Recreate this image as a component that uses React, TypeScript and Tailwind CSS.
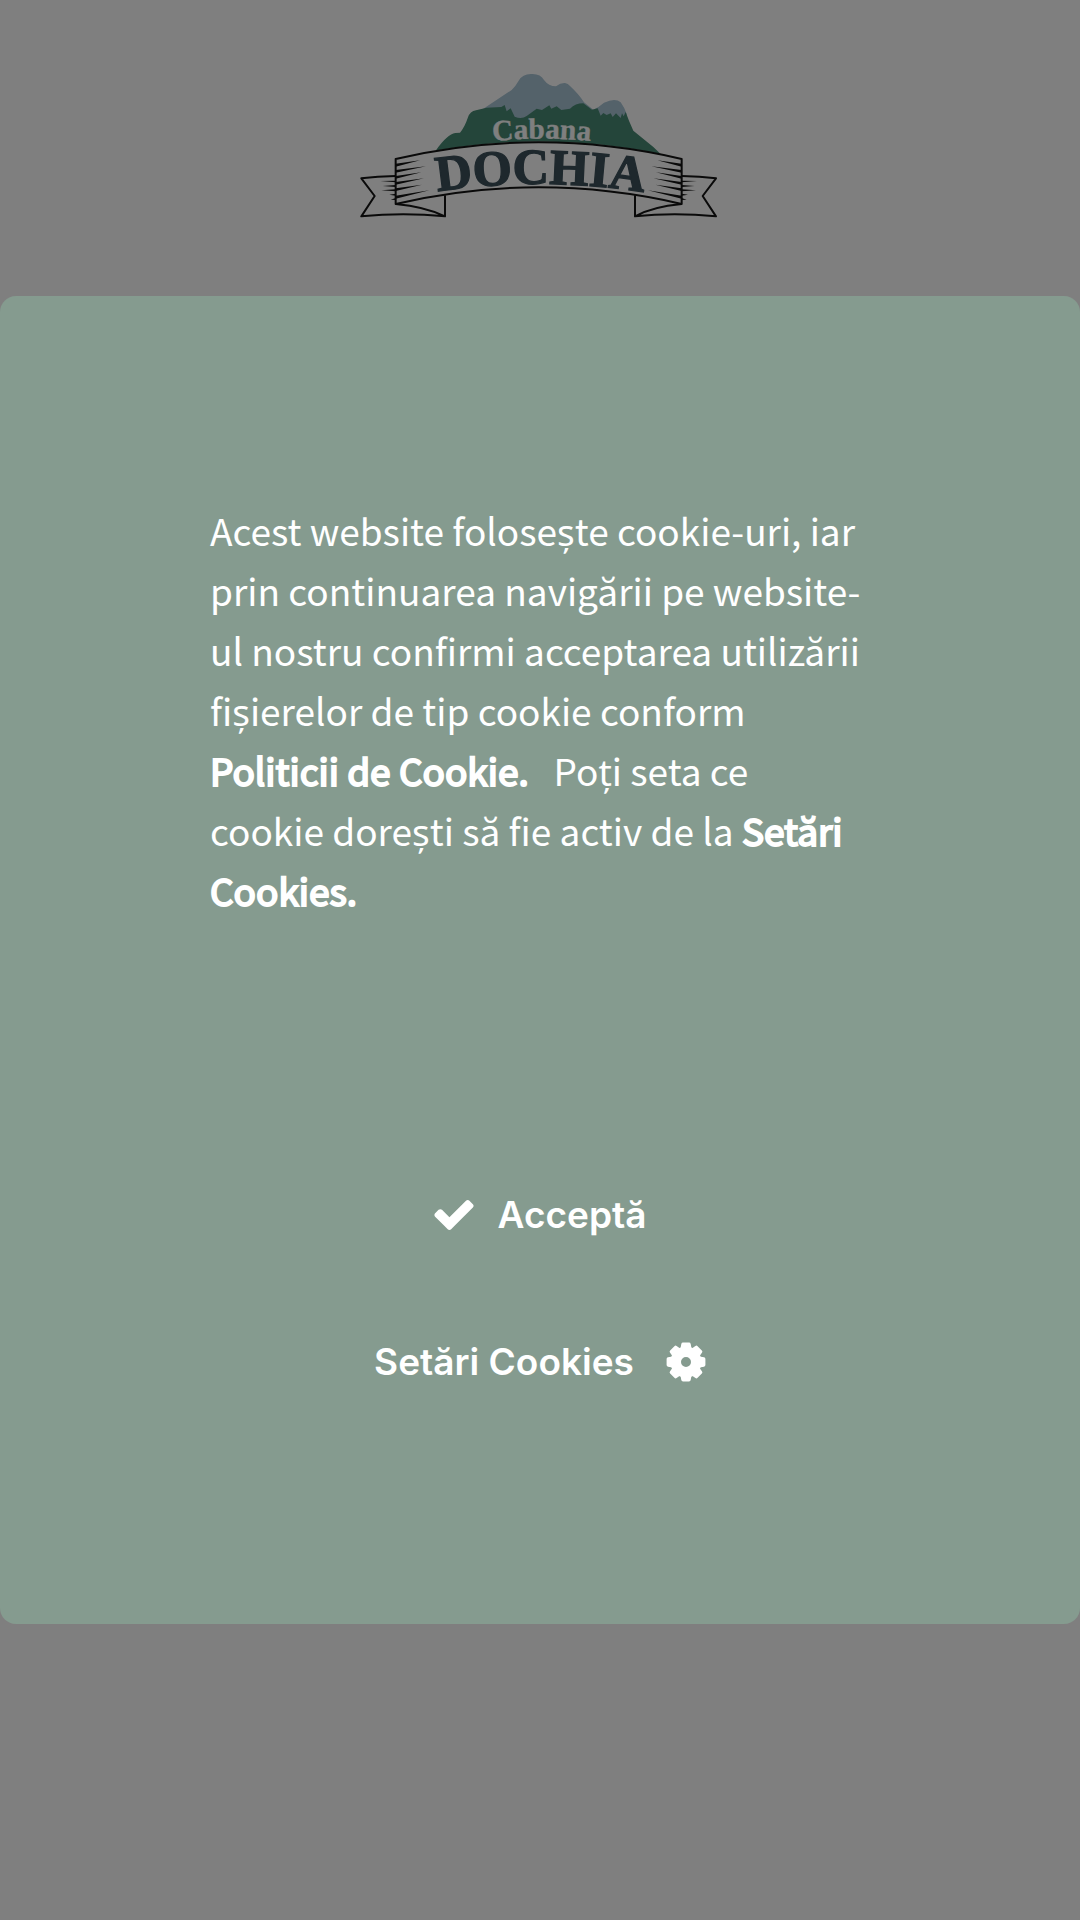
// ── Logo ──────────────────────────────────────────────────────────────────────

// one half of the ribbon, the other half is mirrored
function RibbonHalf({ fold }: { fold: number }) {
  return (
    <g>
      <path
        d={`M167 348 Q112 349 64 355 L104 408 L64 469 Q190 456 ${fold} 469 V406 M167 432 Q255 440 ${fold} 469`}
        fill="none"
        stroke="#141414"
        strokeWidth="6"
        strokeLinejoin="round"
      />
      <path
        d="M167 311 L240 301 L167 320Z M167 330 L258 319 L167 338Z M167 348 L244 337 L167 356Z M167 366 L252 355 L167 374Z M167 385 L246 374 L167 393Z M167 407 L268 391 L167 416Z"
        fill="#141414"
      />
      <path
        d="M167 362 L121 363 L167 367Z M167 375 L128 378 L167 381Z M167 388 L124 391 L167 394Z M167 401 L148 404 L167 407Z M167 414 L152 419 L167 420Z"
        fill="#141414"
      />
    </g>
  );
}

function Logo() {
  return (
    <svg viewBox="60 36 1080 438" className="w-[360px] h-auto" role="img" aria-label="Cabana Dochia">
      {/* snow */}
      <path
        d="M430 146 L515 90 Q527 78 536 62 Q548 41 575 42 Q602 41 612 60 Q626 79 648 79 Q662 68 675 69 Q684 70 690 78 Q718 104 732 127 L760 149 Q776 142 792 128 Q826 112 842 127 Q853 142 860 162 L850 200 H450 Z"
        fill="#a8c4d4"
      />
      {/* forest */}
      <path
        d="M287 272 Q322 222 346 219 L360 218 Q374 202 384 172 Q390 154 408 151 L440 143 L484 141 L494 135 L500 154 L512 145 L524 170 Q545 179 560 168 L590 146 L606 150 L628 136 L634 146 L650 139 L664 150 L690 146 Q706 130 730 130 L744 140 L756 149 L773 145 L782 167 L790 159 L800 165 L812 160 L818 171 L828 160 L842 174 L846 160 L851 169 L857 156 Q866 182 880 212 L940 261 L962 282 Q625 212 287 272Z"
        fill="#488a74"
      />
      <RibbonHalf fold={315} />
      <g transform="translate(1192 0) scale(-1 1)">
        <RibbonHalf fold={307} />
      </g>
      <path
        d="M167 297 Q596 197 1025 297 V432 Q596 332 167 432Z"
        fill="none"
        stroke="#141414"
        strokeWidth="6"
        strokeLinejoin="round"
      />
      <path id="arc-top" d="M440 245 Q605 227 770 245" fill="none" />
      <path id="arc-name" d="M257 400 Q602 342 947 403" fill="none" />
      <g fontFamily="'Liberation Serif', serif" fontWeight="700" textAnchor="middle">
        <text fill="#ffffff" stroke="#ffffff" strokeWidth="1" fontSize="88">
          <textPath href="#arc-top" startOffset="50%">Cabana</textPath>
        </text>
        <text fill="#3c505a" stroke="#3c505a" strokeWidth="4" fontSize="151">
          <textPath href="#arc-name" startOffset="50%">DOCHIA</textPath>
        </text>
      </g>
    </svg>
  );
}

// ── Icons ─────────────────────────────────────────────────────────────────────

function CheckIcon() {
  return (
    <svg viewBox="121 334 1550 1188" className="w-10 h-[30px]" fill="currentColor" aria-hidden="true">
      <path d="M1671 566q0 40-28 68l-724 724-136 136q-28 28-68 28t-68-28l-136-136-362-362q-28-28-28-68t28-68l136-136q28-28 68-28t68 28l294 295 656-657q28-28 68-28t68 28l136 136q28 28 28 68z" />
    </svg>
  );
}

const TEETH = [0, 45, 90, 135];

function CogIcon() {
  return (
    <svg viewBox="0 0 40 40" className="size-10" fill="currentColor" aria-hidden="true">
      <path fillRule="evenodd" d="M20 4.5a15.5 15.5 0 1 0 0 31a15.5 15.5 0 1 0 0-31ZM20 15a5 5 0 1 1 0 10a5 5 0 1 1 0-10Z" />
      {TEETH.map(angle => (
        <path
          key={angle}
          transform={`rotate(${angle} 20 20)`}
          d="M14.2 8 L15.3 2 Q15.6 .6 17 .6 H23 Q24.4 .6 24.7 2 L25.8 8Z M14.2 32 L15.3 38 Q15.6 39.4 17 39.4 H23 Q24.4 39.4 24.7 38 L25.8 32Z"
        />
      ))}
    </svg>
  );
}

// ── Main ──────────────────────────────────────────────────────────────────────

export default function App() {
  return (
    <div className="min-h-screen bg-white">
      <header className="flex justify-center pt-[72px]">
        <a href="#home">
          <Logo />
        </a>
      </header>

      {/* ── Cookie dialog ── */}
      <div className="fixed inset-0 flex items-center bg-black/50">
        <div
          role="dialog"
          aria-label="Cookies"
          className="w-full rounded-2xl bg-[#859b8f] px-[210px] pt-[204px] pb-[232px] text-white"
        >
          <p className="pr-1 font-['Noto_Sans_CJK_JP','Noto_Sans',sans-serif] text-[37px] leading-[60px]">
            Acest website folosește cookie-uri, iar prin continuarea navigării pe website-ul nostru confirmi
            acceptarea utilizării fișierelor de tip cookie conform{' '}
            <a href="#politica" className="[-webkit-text-stroke:2px_white]">Politicii de Cookie.</a>&nbsp;&nbsp; Poți
            seta ce cookie dorești să fie activ de la{' '}
            <a href="#setari" className="[-webkit-text-stroke:2px_white]">Setări Cookies.</a>
          </p>

          <div className="mt-[265px] flex flex-col items-center gap-[87px] font-['Inter',sans-serif] text-[37px] leading-[60px] font-semibold">
            <button type="button" className="flex items-center gap-6">
              <CheckIcon />
              Acceptă
            </button>
            <button type="button" className="flex items-center gap-8">
              Setări Cookies
              <CogIcon />
            </button>
          </div>
        </div>
      </div>
    </div>
  );
}
